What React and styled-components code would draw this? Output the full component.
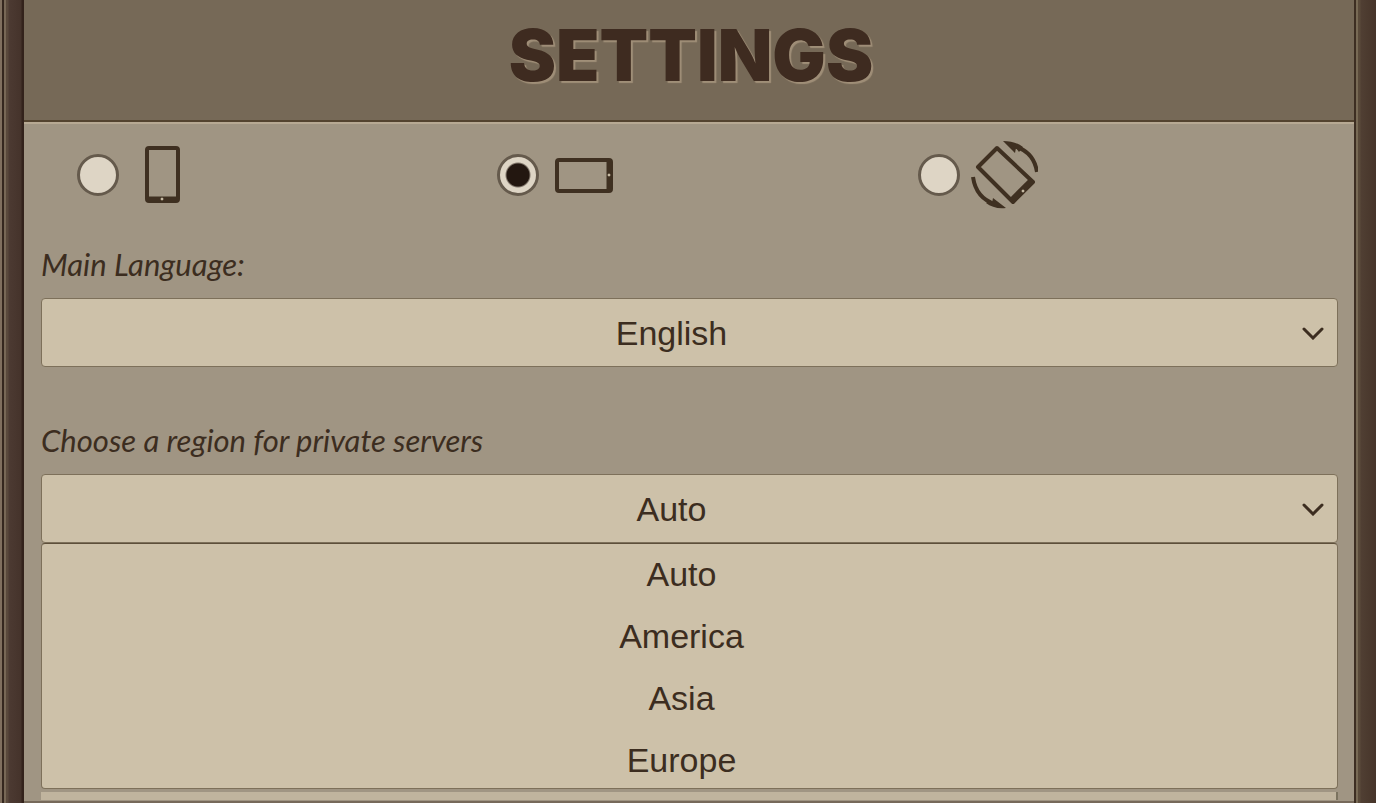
import React, { useState } from 'react';
import styled, { createGlobalStyle } from 'styled-components';

const GlobalStyle = createGlobalStyle`
  * {
    box-sizing: border-box;
  }

  body {
    margin: 0;
    background: #4a392f;
    color: #3c2d20;
    font-family: 'Liberation Sans', Arial, sans-serif;
  }
`;

const Frame = styled.main`
  display: grid;
  grid-template-columns: 24px 1fr 22px;
  min-height: 100vh;
`;

const LeftRail = styled.div`
  background: linear-gradient(
    to right,
    #806f5e 0 2px,
    #35271e 2px 4px,
    #786856 4px 6px,
    #5a493c 6px 8px,
    #4c3a32 9px,
    #45332b 21px,
    #33221b 22px
  );
`;

const RightRail = styled.div`
  background: linear-gradient(
    to right,
    #3d2e22 0 2px,
    #786a55 2px 4px,
    #5a4a3a 4px 6px,
    #503f33 7px,
    #463429 22px
  );
`;

const Panel = styled.section`
  display: flex;
  flex-direction: column;
  min-width: 0;
`;

const Header = styled.header`
  display: flex;
  justify-content: center;
  padding: 14px 0 24px;
  background: #766957;
  border-bottom: 2px solid #53432f;
`;

const Title = styled.h1`
  margin: 0;
  padding-left: 4px;
  color: #3e2b20;
  font-family: Inter, sans-serif;
  font-size: 71px;
  font-weight: 900;
  line-height: 82px;
  text-shadow: 2px 2px 1px #a08f78;
`;

const Content = styled.div`
  flex: 1;
  padding: 17px 16px 0 17px;
  background: #a09583;
  border-top: 2px solid #b7a993;
`;

const Orientations = styled.div`
  display: grid;
  grid-template-columns: repeat(3, 1fr);
  padding-left: 36px;
  margin-bottom: 36px;
`;

const Orientation = styled.label`
  display: flex;
  align-items: center;
  gap: 10px;
`;

const Radio = styled.input`
  appearance: none;
  width: 42px;
  height: 42px;
  margin: 0;
  border: 3px solid #655a4c;
  border-radius: 50%;
  background: #ded5c5;

  &:checked {
    background: radial-gradient(circle, #231710 0 11px, #ded5c5 13px);
  }
`;

const Icon = styled.svg`
  width: 68px;
  height: 68px;
  fill: none;
  stroke: #3f3021;
  stroke-width: 4;
`;

const Field = styled.div`
  margin-bottom: ${({ $last }) => ($last ? '3px' : '54px')};
`;

const Label = styled.label`
  display: block;
  margin-bottom: 15px;
  font-family: Lato, sans-serif;
  font-size: 31px;
  font-style: italic;
  line-height: 38px;
`;

const SelectBox = styled.div`
  display: grid;
  grid-template-columns: 1fr 36px;
  align-items: center;
`;

const Select = styled.select`
  grid-area: 1 / 1 / 2 / 3;
  appearance: none;
  width: 100%;
  height: 69px;
  padding: 0 36px 0 0;
  border: 1px solid #7d705a;
  border-radius: 4px;
  background: #cdc1a9;
  color: #3c2d20;
  font-family: inherit;
  font-size: 34px;
  text-align: center;
  text-align-last: center;
`;

const Chevron = styled.svg`
  grid-area: 1 / 2 / 2 / 3;
  width: 22px;
  height: 14px;
  fill: none;
  stroke: #3c2d20;
  stroke-width: 3;
  stroke-linecap: round;
  pointer-events: none;
`;

const Options = styled.ul`
  display: grid;
  gap: 6px;
  margin: 0;
  padding: 2px 0 0;
  border: 1px solid #7d705a;
  border-top-color: #5d4f3a;
  border-radius: 4px;
  background: #cdc1a9;
  list-style: none;
`;

const Option = styled.button`
  width: 100%;
  padding: 0 16px 0 0;
  border: 0;
  background: none;
  color: #3c2d20;
  font-family: inherit;
  font-size: 34px;
  line-height: 56px;
`;

const NextField = styled.div`
  height: 8px;
  background: #c0b49e;
  border-right: 2px solid #7b735f;
`;

const Footer = styled.footer`
  height: 2px;
  background: #76695a;
`;

const PortraitIcon = () => (
  <Icon viewBox="0 0 68 68" aria-hidden="true">
    <rect x="18" y="7" width="31" height="53" rx="2" />
    <path d="M18 58h31" strokeWidth="5" />
    <circle cx="33" cy="58" r="1" fill="#d0c4ad" stroke="#d0c4ad" strokeWidth="1" />
  </Icon>
);

const LandscapeIcon = () => (
  <Icon viewBox="0 0 68 68" aria-hidden="true">
    <rect x="8" y="19" width="54" height="31" rx="2" />
    <path d="M60 19v31" strokeWidth="5" />
    <circle cx="60" cy="34" r="1" fill="#d0c4ad" stroke="#d0c4ad" strokeWidth="1" />
  </Icon>
);

const RotateIcon = () => (
  <Icon viewBox="0 0 68 68" aria-hidden="true">
    <path d="M27 7 L8 26 L43 61 L63 41 Z" strokeLinejoin="round" />
    <path d="M42 59 L61 40" strokeWidth="6" />
    <circle cx="53" cy="50" r="1" fill="#d0c4ad" stroke="#d0c4ad" strokeWidth="1" />
    <path d="M44 5 C58 9 65 18 67 31" />
    <path d="M33 0 C41 0 48 2 53 6 L49 11 L46 7 L45 12 Z" fill="#3f3021" stroke="none" />
    <path d="M3 36 C5 50 12 59 25 63" />
    <path d="M36 67 C28 68 21 66 16 62 L20 59 L22 62 L23 57 Z" fill="#3f3021" stroke="none" />
  </Icon>
);

const orientations = [
  { name: 'portrait', Picture: PortraitIcon },
  { name: 'landscape', Picture: LandscapeIcon },
  { name: 'rotate', Picture: RotateIcon },
];

const regions = ['Auto', 'America', 'Asia', 'Europe'];

const DropDown = ({ children, ...props }) => (
  <SelectBox>
    <Select {...props}>{children}</Select>
    <Chevron viewBox="0 0 22 14" aria-hidden="true">
      <path d="M2 3l9 9 9-9" />
    </Chevron>
  </SelectBox>
);

const App = () => {
  const [orientation, setOrientation] = useState('landscape');
  const [region, setRegion] = useState('Auto');
  const [open, setOpen] = useState(true);

  const toggleList = (e) => {
    e.preventDefault();
    setOpen(!open);
  };

  const pickRegion = (name) => {
    setRegion(name);
    setOpen(false);
  };

  return (
    <>
      <GlobalStyle />
      <Frame>
        <LeftRail />
        <Panel>
          <Header>
            <Title>SETTINGS</Title>
          </Header>
          <Content>
            <Orientations role="radiogroup" aria-label="Orientation">
              {orientations.map(({ name, Picture }) => (
                <Orientation key={name}>
                  <Radio
                    type="radio"
                    name="orientation"
                    aria-label={name}
                    checked={orientation === name}
                    onChange={() => setOrientation(name)}
                  />
                  <Picture />
                </Orientation>
              ))}
            </Orientations>

            <Field>
              <Label htmlFor="language">Main Language:</Label>
              <DropDown id="language">
                <option>English</option>
              </DropDown>
            </Field>

            <Field $last>
              <Label htmlFor="region">Choose a region for private servers</Label>
              <DropDown
                id="region"
                value={region}
                onMouseDown={toggleList}
                onChange={(e) => setRegion(e.target.value)}
              >
                {regions.map((name) => (
                  <option key={name}>{name}</option>
                ))}
              </DropDown>
              {open && (
                <Options>
                  {regions.map((name) => (
                    <li key={name}>
                      <Option type="button" onClick={() => pickRegion(name)}>
                        {name}
                      </Option>
                    </li>
                  ))}
                </Options>
              )}
            </Field>
            <NextField />
          </Content>
          <Footer />
        </Panel>
        <RightRail />
      </Frame>
    </>
  );
};

export default App;
